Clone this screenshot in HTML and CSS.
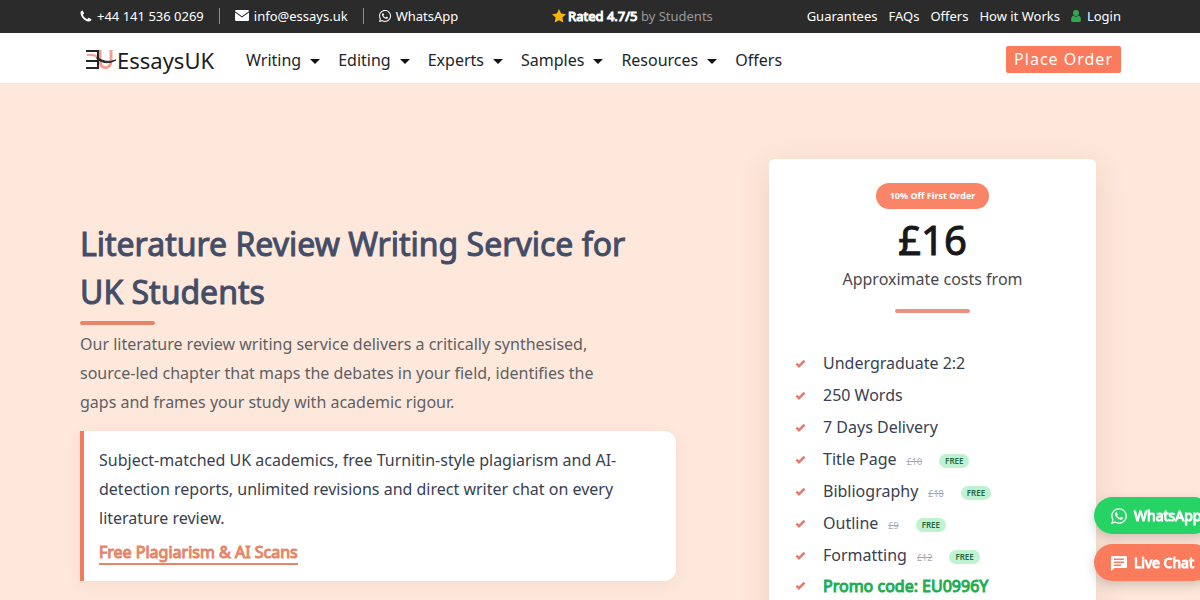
FILE: index.html
```html
<!DOCTYPE html>
<html lang="en">
<head>
    <meta charset="UTF-8">
    <meta name="viewport" content="width=device-width, initial-scale=1.0">
    <title>Literature Review Writing Service for UK Students</title>
    <link rel="stylesheet" href="styles.css">
</head>
<body>
    <!-- Shared icons -->
    <svg class="icon-defs" aria-hidden="true">
        <symbol id="icon-check" viewBox="0 0 12 10">
            <path d="M1.5 5.2 4.3 8 10.5 1.8" fill="none" stroke="currentColor" stroke-width="2.8"/>
        </symbol>
        <symbol id="icon-whatsapp" viewBox="0 0 448 512">
            <path fill="currentColor" d="M380.9 97.1C339 55.1 283.2 32 223.9 32c-122.4 0-222 99.6-222 222 0 39.1 10.2 77.3 29.6 111L0 480l117.7-30.9c32.4 17.7 68.9 27 106.1 27h.1c122.3 0 224.1-99.6 224.1-222 0-59.3-25.2-115-67.1-157zm-157 341.6c-33.2 0-65.7-8.9-94-25.7l-6.7-4-69.8 18.3L72 359.2l-4.4-7c-18.5-29.4-28.2-63.3-28.2-98.2 0-101.7 82.8-184.5 184.6-184.5 49.3 0 95.6 19.2 130.4 54.1 34.8 34.9 56.2 81.2 56.1 130.5 0 101.8-84.9 184.6-186.6 184.6zm101.2-138.2c-5.5-2.8-32.8-16.2-37.9-18-5.1-1.9-8.8-2.8-12.5 2.8-3.7 5.6-14.3 18-17.6 21.8-3.2 3.7-6.5 4.2-12 1.4-32.6-16.3-54-29.1-75.5-66-5.7-9.8 5.7-9.1 16.3-30.3 1.8-3.7.9-6.9-.5-9.7-1.4-2.8-12.5-30.1-17.1-41.2-4.5-10.8-9.1-9.3-12.5-9.5-3.2-.2-6.9-.2-10.6-.2-3.7 0-9.7 1.4-14.8 6.9-5.1 5.6-19.4 19-19.4 46.3 0 27.3 19.9 53.7 22.6 57.4 2.8 3.7 39.1 59.7 94.8 83.8 35.2 15.2 49 16.5 66.6 13.9 10.7-1.6 32.8-13.4 37.4-26.4 4.6-13 4.6-24.1 3.2-26.4-1.3-2.5-5-3.9-10.5-6.6z"/>
        </symbol>
    </svg>

    <div class="topbar">
        <div class="container topbar-inner">
            <div class="topbar-contact">
                <a href="#">
                    <svg class="icon-phone" viewBox="0 0 12 12" aria-hidden="true"><path fill="currentColor" d="M2.6.5C1.2.8.5 1.7.5 2.9c0 3.8 4.8 8.6 8.6 8.6 1.2 0 2.1-.8 2.4-2.2L8.6 7.8 7.3 9.2C5.4 8.4 3.6 6.6 2.8 4.7l1.4-1.3z"/></svg>
                    +44 141 536 0269
                </a>
                <span class="divider"></span>
                <a href="#">
                    <svg class="icon-mail" viewBox="0 0 14 11" aria-hidden="true"><path fill="currentColor" d="M0 1.2Q0 0 1.2 0h11.6Q14 0 14 1.2L7 6.2zM0 2.6l7 5 7-5v7.2q0 1.200-1.200 1.200H1.200Q0 11 0 9.800z"/></svg>
                    info@essays.uk
                </a>
                <span class="divider"></span>
                <a href="#">
                    <svg class="icon-wa" aria-hidden="true"><use href="#icon-whatsapp"/></svg>
                    WhatsApp
                </a>
            </div>
            <p class="rating">
                <svg class="icon-star" viewBox="0 0 14 14" aria-hidden="true"><path fill="#f5b50f" d="m7 0 2.100 4.600 4.900.6-3.600 3.400.9 5L7 11.200l-4.300 2.400.9-5L0 5.200l4.900-.6z"/></svg>
                <strong>Rated 4.7/5</strong>&nbsp;by Students
            </p>
            <nav class="topbar-links">
                <a href="#">Guarantees</a>
                <a href="#">FAQs</a>
                <a href="#">Offers</a>
                <a href="#">How it Works</a>
                <a href="#">
                    <svg class="icon-user" viewBox="0 0 10 12" aria-hidden="true"><circle cx="5" cy="3" r="3" fill="#33a852"/><path fill="#33a852" d="M2 5.500Q5 7.800 8 5.500q2 1 2 4.500 0 2-1.500 2h-7Q0 12 0 10q0-3.500 2-4.500z"/></svg>
                    Login
                </a>
            </nav>
        </div>
    </div>

    <header class="header">
        <div class="container header-inner">
            <a class="logo" href="#">
                <svg class="logo-mark" viewBox="0 0 32 22" aria-hidden="true">
                    <path d="M15 1v10q0 7.500 5.500 7.500T26 11V1" fill="none" stroke="#f2a08e" stroke-width="3"/>
                    <path d="M2 6q7-1 12 3" fill="none" stroke="#f2a08e" stroke-width="2"/>
                    <path d="M1 2h12v7M1 12h12v7H1" fill="none" stroke="#26262a" stroke-width="2"/>
                    <path d="M12 8q8 7 19 3-10 6-19-1z" fill="#26262a" stroke="#26262a"/>
                </svg>
                <span>EssaysUK</span>
            </a>
            <nav class="menu">
                <a class="has-menu" href="#">Writing</a>
                <a class="has-menu" href="#">Editing</a>
                <a class="has-menu" href="#">Experts</a>
                <a class="has-menu" href="#">Samples</a>
                <a class="has-menu" href="#">Resources</a>
                <a href="#">Offers</a>
            </nav>
            <a class="order-link" href="#">Place Order</a>
        </div>
    </header>

    <main class="hero">
        <div class="container hero-inner">
            <section class="intro">
                <h1>Literature Review Writing Service for UK Students</h1>
                <div class="rule"></div>
                <p class="lead">Our literature review writing service delivers a critically synthesised, source-led chapter that maps the debates in your field, identifies the gaps and frames your study with academic rigour.</p>
                <div class="callout">
                    <p>Subject-matched UK academics, free Turnitin-style plagiarism and AI-detection reports, unlimited revisions and direct writer chat on every literature review.</p>
                    <a href="#">Free Plagiarism &amp; AI Scans</a>
                </div>
            </section>

            <aside class="price-card">
                <span class="offer">10% Off First Order</span>
                <div class="price">£16</div>
                <p class="price-note">Approximate costs from</p>
                <div class="rule"></div>
                <ul class="features">
                    <li><svg class="check"><use href="#icon-check"/></svg>Undergraduate 2:2</li>
                    <li><svg class="check"><use href="#icon-check"/></svg>250 Words</li>
                    <li><svg class="check"><use href="#icon-check"/></svg>7 Days Delivery</li>
                    <li><svg class="check"><use href="#icon-check"/></svg>Title Page <del>£10</del> <span class="free">FREE</span></li>
                    <li><svg class="check"><use href="#icon-check"/></svg>Bibliography <del>£18</del> <span class="free">FREE</span></li>
                    <li><svg class="check"><use href="#icon-check"/></svg>Outline <del>£9</del> <span class="free">FREE</span></li>
                    <li><svg class="check"><use href="#icon-check"/></svg>Formatting <del>£12</del> <span class="free">FREE</span></li>
                    <li class="promo"><svg class="check"><use href="#icon-check"/></svg>Promo code: EU0996Y</li>
                </ul>
            </aside>
        </div>
    </main>

    <div class="chat-buttons">
        <a class="chat-whatsapp" href="#">
            <svg aria-hidden="true"><use href="#icon-whatsapp"/></svg>
            WhatsApp
        </a>
        <button class="chat-live" type="button">
            <svg viewBox="0 0 18 18" aria-hidden="true"><path fill="currentColor" fill-rule="evenodd" d="M2.500 2h13Q17 2 17 3.500v9q0 1.500-1.500 1.500H4.500L1 17V3.500Q1 2 2.500 2zM4 4.500V6h10V4.500zm0 3V9h10V7.500zm0 3V12h7v-1.500z"/></svg>
            Live Chat
        </button>
    </div>
</body>
</html>
```
FILE: styles.css
```css
* {
    box-sizing: border-box;
}
body {
    margin: 0;
    font-family: "Noto Sans", sans-serif;
    font-size: 16px;
    color: #374151;
    background-color: #fee8db;
}
h1, p, ul {
    margin: 0;
    padding: 0;
}
a {
    color: inherit;
    text-decoration: none;
}
.icon-defs {
    display: none;
}
.container {
    padding: 0 79px 0 80px;
}

/* Top bar */
.topbar {
    background-color: #2b2b2b;
    color: #fff;
    font-size: 13px;
}
.topbar-inner {
    display: flex;
    align-items: center;
    justify-content: space-between;
    height: 33px;
    padding-bottom: 2px;
}
.topbar-contact, .topbar-links, .topbar a, .rating {
    display: flex;
    align-items: center;
}
.topbar-contact a {
    gap: 5px;
}
.topbar-links {
    gap: 11px;
}
.topbar-links a {
    gap: 6px;
}
.divider {
    width: 1px;
    height: 16px;
    margin: 0 15px;
    background-color: #8b8b8b;
}
.rating {
    color: #999;
}
.rating strong {
    color: #fff;
    font-weight: 400;
    -webkit-text-stroke: 1px #fff;
}
.icon-phone {
    width: 12px;
    height: 12px;
}
.icon-mail {
    width: 14px;
    height: 11px;
}
.icon-wa {
    width: 12px;
    height: 14px;
}
.icon-star {
    width: 14px;
    height: 14px;
    margin-right: 2px;
}
.icon-user {
    width: 10px;
    height: 12px;
}

/* Header */
.header {
    background-color: #fff;
    color: #212529;
    border-bottom: 1px solid #f3e6df;
}
.header-inner {
    display: flex;
    align-items: center;
    height: 50px;
    padding-top: 3px;
}
.logo {
    display: flex;
    align-items: center;
    margin-left: 5px;
    color: #1c1c1e;
    font-size: 22px;
}
.logo-mark {
    width: 32px;
    height: 22px;
}
.menu {
    display: flex;
    gap: 18px;
    margin-left: 32px;
}
.has-menu::after {
    content: "";
    display: inline-block;
    margin-left: 9px;
    vertical-align: 2px;
    border-top: 5px solid #111;
    border-left: 5px solid transparent;
    border-right: 5px solid transparent;
}
.order-link {
    margin-left: auto;
    padding: 2px 8px;
    border-radius: 2px;
    background-color: #fb7b5d;
    color: #fff;
    line-height: 23px;
    letter-spacing: 1px;
}

/* Hero */
.hero-inner {
    display: grid;
    grid-template-columns: minmax(0, 596fr) minmax(0, 327fr);
    gap: 93px;
    align-items: start;
    padding-top: 75px;
    padding-right: 104px;
}
.intro {
    padding-top: 61px;
}
h1 {
    color: #444d67;
    font-size: 32px;
    font-weight: 400;
    line-height: 48px;
    -webkit-text-stroke: 1px #444d67;
}
.rule {
    width: 75px;
    height: 4px;
    border-radius: 2px;
    background-color: #e88469;
}
.intro .rule {
    margin: 5px 0;
}
.lead {
    max-width: 550px;
    color: #5f6065;
    line-height: 29px;
}
.callout {
    margin-top: 14px;
    padding: 15px 40px 14px 15px;
    border-left: 4px solid #f07d62;
    border-radius: 0 12px 12px 0;
    background-color: #fff;
    box-shadow: 0 4px 16px rgba(120, 60, 30, 0.07);
    line-height: 29px;
}
.callout a {
    display: inline-block;
    margin-top: 8px;
    border-bottom: 2px solid #e88469;
    color: #e88469;
    line-height: 22px;
    -webkit-text-stroke: 1px #e88469;
}

/* Price card */
.price-card {
    display: flex;
    flex-direction: column;
    align-items: center;
    padding: 24px 26px;
    border-radius: 6px;
    background-color: #fff;
    box-shadow: 0 8px 32px rgba(120, 60, 30, 0.14);
}
.offer {
    padding: 0 14px;
    border-radius: 13px;
    background-color: #fa8468;
    color: #fff;
    font-size: 9px;
    font-weight: 700;
    line-height: 26px;
}
.price {
    margin-top: 4px;
    color: #16181b;
    font-size: 40px;
    line-height: 54px;
    -webkit-text-stroke: 1px #16181b;
}
.price-note {
    color: #48494d;
    line-height: 24px;
}
.price-card .rule {
    margin: 18px 0 34px;
    background-color: #e9937f;
}
.features {
    width: 100%;
    list-style: none;
}
.features li {
    display: flex;
    align-items: center;
    height: 32px;
}
.check {
    width: 11px;
    height: 9px;
    margin-right: 17px;
    color: #e9786a;
}
.features del {
    margin: 4px 17px 0 10px;
    color: #a4a8b2;
    font-size: 9px;
}
.free {
    margin-top: 4px;
    padding: 0 6px;
    border-radius: 7px;
    background-color: #bdf3cf;
    color: #27643f;
    font-size: 8px;
    font-weight: 600;
    line-height: 14px;
}
.features .promo {
    height: 29px;
    color: #22ad53;
    -webkit-text-stroke: 1px #22ad53;
}

/* Floating chat buttons */
.chat-buttons {
    position: fixed;
    right: -12px;
    bottom: 19px;
    display: flex;
    flex-direction: column;
    gap: 10px;
}
.chat-buttons a, .chat-buttons button {
    display: flex;
    align-items: center;
    gap: 6px;
    width: 118px;
    height: 37px;
    padding: 0 0 0 16px;
    border: 0;
    border-radius: 19px;
    color: #fff;
    font: 400 14px "Noto Sans", sans-serif;
    -webkit-text-stroke: 1px #fff;
    box-shadow: 0 4px 12px rgba(0, 0, 0, 0.18);
    white-space: nowrap;
    cursor: pointer;
}
.chat-buttons svg {
    width: 18px;
    height: 18px;
    flex-shrink: 0;
}
.chat-whatsapp {
    background-color: #28d366;
}
.chat-buttons .chat-live {
    background-color: #fb7b5d;
}
```
